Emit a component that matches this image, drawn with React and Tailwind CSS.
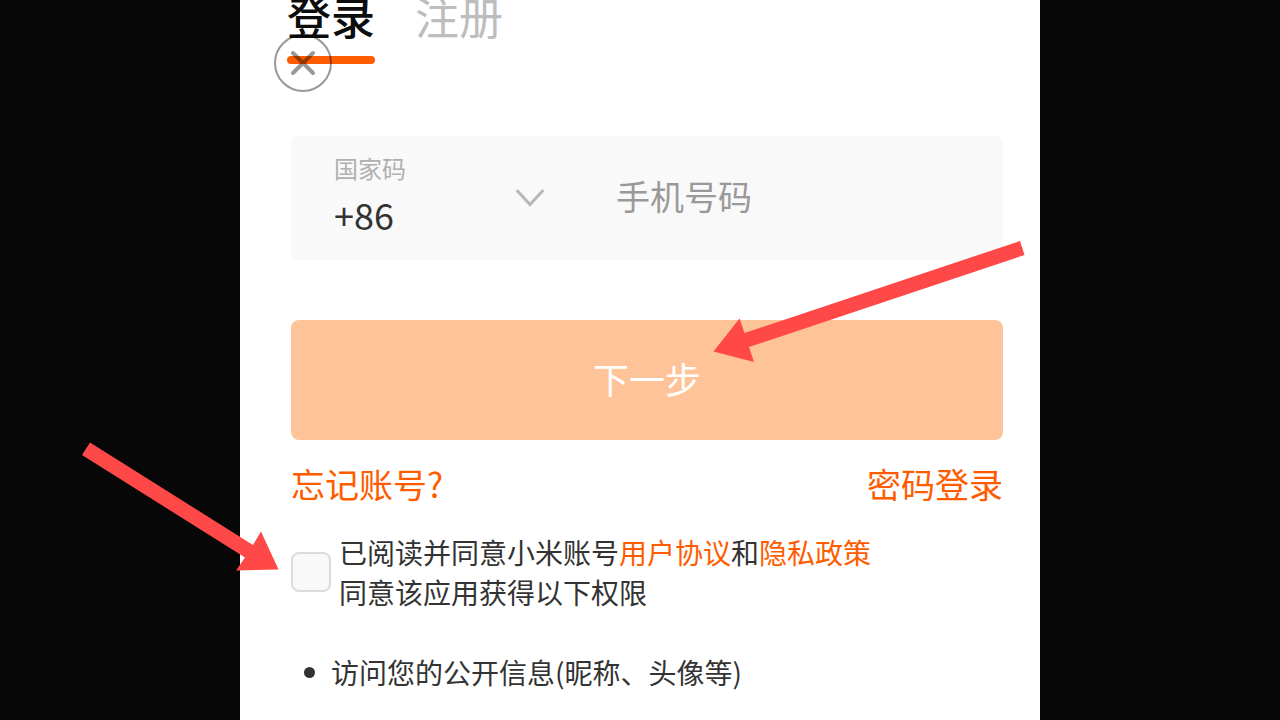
import { useState } from 'react';

const PERMISSIONS = ['访问您的公开信息(昵称、头像等)'];

const TABS = [
    { id: 'login', label: '登录' },
    { id: 'register', label: '注册' },
];

function Tabs({ active, onChange }) {
    return (
        <nav className="-ml-1 flex gap-10">
            {TABS.map((tab) => (
                <button
                    key={tab.id}
                    type="button"
                    onClick={() => onChange(tab.id)}
                    className={`flex flex-col gap-6 text-[44px] leading-8 ${
                        active === tab.id ? 'font-medium text-[#0c0c0c]' : 'text-[#bdbdbd]'
                    }`}
                >
                    {tab.label}
                    {active === tab.id && <span className="h-2 w-full rounded-full bg-[#ff5c00]" />}
                </button>
            ))}
        </nav>
    );
}

function CloseButton() {
    return (
        <button type="button" aria-label="关闭" className="absolute top-[34px] left-[34px] opacity-40">
            <svg width="58" height="58" viewBox="0 0 58 58" fill="none" stroke="#000">
                <circle cx="29" cy="29" r="28" strokeWidth="2" />
                <path d="M19 19 39 39M39 19 19 39" strokeWidth="4" strokeLinecap="round" />
            </svg>
        </button>
    );
}

function PhoneField() {
    return (
        <div className="flex h-[124px] items-center rounded-lg bg-[#f9f9f9] px-[43px]">
            <div className="flex w-[182px] flex-col gap-2 pb-1">
                <label htmlFor="country" className="text-2xl leading-7 text-[#b0b0b0]">
                    国家码
                </label>
                <select
                    id="country"
                    defaultValue="+86"
                    className="h-12 appearance-none bg-transparent text-4xl text-[#333] outline-none"
                >
                    <option>+86</option>
                </select>
            </div>
            <svg width="28" height="18" viewBox="0 0 28 18" fill="none" className="shrink-0">
                <path d="M1.5 2 14 15.5 26.5 2" stroke="#b8b8b8" strokeWidth="3" strokeLinecap="round" />
            </svg>
            <input
                type="tel"
                aria-label="手机号码"
                placeholder="手机号码"
                className="ml-[72px] min-w-0 flex-1 bg-transparent pb-1 text-[34px] leading-10 text-[#333] outline-none placeholder:text-[#999]"
            />
        </div>
    );
}

function Arrows() {
    return (
        <svg
            width="1280"
            height="720"
            viewBox="0 0 1280 720"
            className="pointer-events-none absolute top-0 left-1/2 -translate-x-1/2"
            fill="#ff4848"
            aria-hidden="true"
        >
            <path d="M1020 241 1024.500 255 749 347 754 362 713.500 351.500 739.500 318.500 744.500 333Z" />
            <path d="M90 442.500 82 455 245 557.500 236 570.500 278.500 569.500 261 531.500 253 545Z" />
        </svg>
    );
}

export default function App() {
    const [tab, setTab] = useState('login');

    return (
        <div className="relative min-h-screen overflow-hidden bg-[#070707] font-['Noto_Sans_CJK_SC',sans-serif] text-[#333]">
            <main className="relative mx-auto min-h-screen w-full max-w-[800px] bg-white pr-[37px] pb-8 pl-[51px]">
                <Tabs active={tab} onChange={setTab} />
                <CloseButton />
                <form className="mt-[72px]" onSubmit={(e) => e.preventDefault()}>
                    <PhoneField />
                    <button
                        type="submit"
                        className="mt-[60px] h-[120px] w-full rounded-lg bg-[#ffc399] pb-1 text-4xl text-white"
                    >
                        下一步
                    </button>
                    <div className="mt-6 flex justify-between text-[34px] leading-10 text-[#ff5c00]">
                        <a href="#forgot">忘记账号?</a>
                        <a href="#password">密码登录</a>
                    </div>
                    <div className="mt-7 flex items-center gap-2 text-[28px] leading-10">
                        <input
                            id="agree"
                            type="checkbox"
                            className="size-10 shrink-0 appearance-none rounded-lg border-2 border-[#dcdcdc] bg-[#f9f9f9] checked:bg-[#ff5c00]"
                        />
                        <label htmlFor="agree">
                            已阅读并同意小米账号
                            <a href="#terms" className="text-[#ff5c00]">用户协议</a>和
                            <a href="#privacy" className="text-[#ff5c00]">隐私政策</a>
                            <br />
                            同意该应用获得以下权限
                        </label>
                    </div>
                </form>
                <ul className="mt-10 pl-[13px] text-[28px] leading-10">
                    {PERMISSIONS.map((item) => (
                        <li key={item} className="flex items-center gap-4">
                            <span className="size-[11px] rounded-full bg-[#333]" />
                            {item}
                        </li>
                    ))}
                </ul>
            </main>
            <Arrows />
        </div>
    );
}
